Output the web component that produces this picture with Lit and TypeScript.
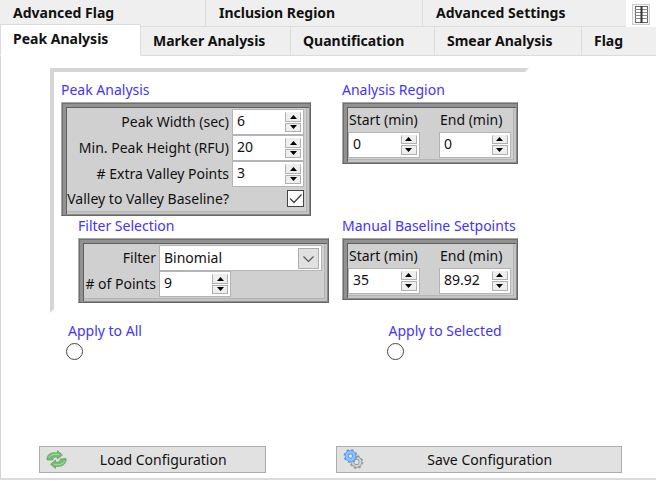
import { LitElement, html, css, svg } from "lit";
import { customElement, state } from "lit/decorators.js";
import { classMap } from "lit/directives/class-map.js";

const tableIcon = svg`
  <rect x="0.5" y="0.5" width="17" height="20" fill="#f4f4f4" stroke="#ccc" />
  <rect x="3.5" y="2.5" width="12" height="16" fill="#fff" stroke="#666" />
  <path d="M3 5.5h13M3 8.5h13M3 11.5h13M3 14.5h13" stroke="#888" />
  <path d="M9.5 2v17" stroke="#333" stroke-width="2" />`;

const reloadIcon = svg`
  <g fill="#72bd72" stroke="#5fa661" stroke-width="0.8" stroke-linejoin="round">
    <path d="M1 10C.5 4.500 5 2 11.500 3V.8L16.500 5 11.300 9V7C8.500 6.500 7 7.800 6.800 10Z" />
    <path d="M20 8.500C21 14 15.500 17.200 9.500 16.200V18.500L4.500 14.200 9.500 10V12.200C13 12.700 14.500 11 14.200 9Z" />
  </g>
  <path d="M3 7.500C4 5 8 3.800 13 4.500M18.500 11C18 14 13 15.300 8 14.600" fill="none" stroke="#b0e0ae" stroke-width="1" />`;

const gearsIcon = svg`
  <circle cx="13.500" cy="13" r="4" fill="none" stroke="#8a8a8a" stroke-width="3.400" />
  <circle cx="13.500" cy="13" r="5.800" fill="none" stroke="#999" stroke-width="2" stroke-dasharray="2.300 2.250" />
  <circle cx="13.500" cy="13" r="4" fill="none" stroke="#d2d2d2" stroke-width="2.200" />
  <circle cx="7.500" cy="7" r="3.800" fill="#d8e8fa" stroke="#4a88d8" stroke-width="4" />
  <circle cx="7.500" cy="7" r="6" fill="none" stroke="#5b98e0" stroke-width="1.800" stroke-dasharray="2.400 2.310" />
  <circle cx="7.500" cy="7" r="3.800" fill="none" stroke="#8fc0f6" stroke-width="2.800" />`;

@customElement("app-root")
class AppRoot extends LitElement {
  @state() private tab = "Peak Analysis";

  static styles = css`
    :host {
      display: flex;
      flex-direction: column;
      min-height: 100vh;
      background: #fff;
      color: #111;
      font: 14px/20px "Noto Sans", "Open Sans", sans-serif;
    }
    * {
      box-sizing: border-box;
    }
    .tabs {
      display: grid;
      background: #efefef;
    }
    .back {
      grid-template-columns: 206fr 217fr 203fr 30px;
      height: 27px;
      border-bottom: 1px solid #dcdcdc;
    }
    .front {
      grid-template-columns: 141fr 150fr 144fr 147fr 74fr;
      height: 29px;
    }
    .tab {
      min-width: 0;
      padding: 0 0 0 13px;
      border: 0;
      border-right: 1px solid #dcdcdc;
      background: none;
      color: #111;
      font: bold 14px/20px "Noto Sans", "Open Sans", sans-serif;
      text-align: left;
      white-space: nowrap;
    }
    .back .tab {
      padding-bottom: 2px;
    }
    .front .tab {
      padding-left: 12px;
      border-bottom: 1px solid #dcdcdc;
    }
    .back .tab:nth-child(3),
    .front .tab:last-child {
      border-right: 0;
    }
    .front .active {
      margin-top: -3px;
      padding-bottom: 2px;
      background: #fff;
      border: 1px solid #dcdcdc;
      border-bottom-color: #fff;
    }
    .grid-button {
      display: flex;
      align-items: center;
      justify-content: center;
      height: 28px;
      padding: 0;
      border: 0;
      background: #fff;
    }
    .panel {
      flex: 1;
      display: flex;
      flex-direction: column;
      margin-bottom: 1px;
      padding: 12px 34px 5px 38px;
      border-left: 1px solid #d4d4d4;
      border-bottom: 2px solid #dcdcdc;
    }
    .frame {
      display: grid;
      grid-template-columns: 284fr 185fr;
      margin: 0 93px 0 11px;
      padding: 8px 0 6px 7px;
      border: 4px solid #fff;
      border-top-color: #d6d6d6;
      border-left-color: #d6d6d6;
    }
    .group {
      display: flex;
      flex-direction: column;
      align-items: flex-start;
      min-height: 136px;
    }
    .group.last {
      min-height: 0;
    }
    .indent {
      padding-left: 17px;
    }
    .title,
    .apply label {
      color: #4433ff;
    }
    .title {
      margin-bottom: 2px;
    }
    .box {
      display: grid;
      align-items: center;
      padding: 6px 6px 5px 5px;
      background: #d0d0d0;
      border: 1px solid #666;
      border-top-color: #aaa;
      border-left-color: #aaa;
      box-shadow: inset 1px 1px #707070, inset -1px -1px #8c8c8c,
        inset 4px 4px #929292, inset 5px 5px #606060,
        inset -3px -3px #c4c4c4, inset -4px -4px #b4b4b4;
    }
    .peak {
      grid-template-columns: 1fr 72px;
      grid-template-rows: repeat(3, 26px) 23px;
      width: 250px;
    }
    .filter {
      grid-template-columns: 75px 72px 1fr;
      grid-template-rows: 26px 26px;
      width: 251px;
    }
    .range {
      grid-template-columns: 72px 72px;
      grid-template-rows: 22px 27px;
      justify-content: space-between;
      width: 176px;
    }
    .range label {
      padding-left: 1px;
    }
    .peak label,
    .filter label {
      padding-right: 3px;
      text-align: right;
      white-space: nowrap;
    }
    .spin {
      display: flex;
      width: 72px;
      height: 26px;
      padding: 2px;
      background: #fff;
      border: 1px solid #b4b4b8;
    }
    .spin input {
      flex: 1;
      min-width: 0;
      padding: 0 0 2px 2px;
      border: 0;
      outline: 0;
      background: none;
      color: #111;
      font: 14px/18px "Noto Sans", "Open Sans", sans-serif;
    }
    .arrows {
      display: grid;
      grid-template-rows: 1fr 1fr;
      gap: 1px;
      width: 16px;
    }
    .arrow {
      display: flex;
      align-items: center;
      justify-content: center;
      min-height: 0;
      padding: 0;
      background: #eee;
      border: 1px solid #b0b0b0;
    }
    .up {
      border-top-color: #eee;
    }
    .arrow svg {
      display: block;
      width: 7px;
      height: 4px;
    }
    .check {
      appearance: none;
      width: 17px;
      height: 17px;
      margin: 0;
      background: #fff;
      border: 1px solid #444;
    }
    .tick {
      display: grid;
      justify-content: end;
    }
    .tick > * {
      grid-area: 1 / 1;
    }
    .tick svg {
      width: 17px;
      height: 17px;
      pointer-events: none;
    }
    .check:not(:checked) + svg {
      visibility: hidden;
    }
    .pick {
      grid-column: 2 / 4;
      display: grid;
      grid-template-columns: 1fr 24px;
    }
    .pick > * {
      grid-row: 1;
    }
    select {
      appearance: none;
      grid-column: 1 / 3;
      height: 26px;
      padding: 0 4px;
      background: #fff;
      border: 1px solid #b4b4b8;
      border-radius: 0;
      color: #111;
      font: inherit;
    }
    .pick svg {
      grid-column: 2;
      place-self: center start;
      width: 21px;
      height: 21px;
      pointer-events: none;
    }
    .apply {
      display: grid;
      grid-template-columns: 320fr 235fr;
      margin: 8px 0 16px 27px;
    }
    .apply div {
      display: flex;
      flex-direction: column;
      align-items: flex-start;
      gap: 2px;
    }
    .apply label {
      padding-left: 2px;
    }
    .apply input {
      appearance: none;
      width: 17px;
      height: 17px;
      margin: 0;
      border: 1px solid #444;
      border-radius: 50%;
    }
    .apply input:checked {
      box-shadow: inset 0 0 0 3px #fff, inset 0 0 0 9px #333;
    }
    .actions {
      display: grid;
      grid-template-columns: 227fr 285fr;
      gap: 70px;
      margin-top: auto;
    }
    .action {
      display: flex;
      align-items: center;
      height: 27px;
      padding: 0 6px;
      background: #e1e1e1;
      border: 1px solid #adadad;
      color: #111;
      font: inherit;
    }
    .action span {
      flex: 1;
    }
  `;

  private tabs(names: string[]) {
    return names.map(
      (name) => html`<button
        role="tab"
        class=${classMap({ tab: true, active: name === this.tab })}
        aria-selected=${name === this.tab}
        @click=${() => (this.tab = name)}
      >${name}</button>`
    );
  }

  private step(id: string, by: number) {
    const input = this.renderRoot.querySelector<HTMLInputElement>(`#${id}`)!;
    input.value = String(Number(input.value) + by);
  }

  private spin(id: string, value: string) {
    return html`
      <span class="spin">
        <input id=${id} type="text" inputmode="decimal" value=${value} />
        <span class="arrows">
          <button class="arrow up" aria-label="Increase" @click=${() => this.step(id, 1)}>
            <svg viewBox="0 0 7 4"><path d="M3.5 0 7 4H0Z" /></svg>
          </button>
          <button class="arrow" aria-label="Decrease" @click=${() => this.step(id, -1)}>
            <svg viewBox="0 0 7 4"><path d="M0 0h7L3.5 4Z" /></svg>
          </button>
        </span>
      </span>
    `;
  }

  private spinRow(id: string, label: string, value: string) {
    return html`<label for=${id}>${label}</label>${this.spin(id, value)}`;
  }

  private range(id: string, title: string, start: string, end: string, last = false) {
    return html`
      <section class=${classMap({ group: true, last })}>
        <div class="title">${title}</div>
        <div class="box range">
          <label for="${id}-start">Start (min)</label>
          <label for="${id}-end">End (min)</label>
          ${this.spin(`${id}-start`, start)} ${this.spin(`${id}-end`, end)}
        </div>
      </section>
    `;
  }

  render() {
    return html`
      <div class="tabs back" role="tablist">
        ${this.tabs(["Advanced Flag", "Inclusion Region", "Advanced Settings"])}
        <button class="grid-button" aria-label="Table">
          <svg width="18" height="21" viewBox="0 0 18 21">${tableIcon}</svg>
        </button>
      </div>
      <div class="tabs front" role="tablist">
        ${this.tabs(["Peak Analysis", "Marker Analysis", "Quantification", "Smear Analysis", "Flag"])}
      </div>
      <main class="panel">
        <div class="frame">
          <section class="group">
            <div class="title">Peak Analysis</div>
            <div class="box peak">
              ${this.spinRow("width", "Peak Width (sec)", "6")}
              ${this.spinRow("height", "Min. Peak Height (RFU)", "20")}
              ${this.spinRow("extra", "# Extra Valley Points", "3")}
              <label for="valley">Valley to Valley Baseline?</label>
              <span class="tick">
                <input class="check" id="valley" type="checkbox" checked />
                <svg viewBox="0 0 17 17"><path d="M3 8.500 7 12.500 14.500 4.500" fill="none" stroke="#444" stroke-width="1.300" /></svg>
              </span>
            </div>
          </section>
          ${this.range("region", "Analysis Region", "0", "0")}
          <section class="group last indent">
            <div class="title">Filter Selection</div>
            <div class="box filter">
              <label for="filter">Filter</label>
              <span class="pick">
                <select id="filter">
                  <option>Binomial</option>
                </select>
                <svg viewBox="0 0 21 21">
                  <rect x="0.500" y="0.500" width="20" height="20" fill="#e1e1e1" stroke="#adadad" />
                  <path d="m5.500 8.500 5 5 5-5" fill="none" stroke="#555" stroke-width="1.200" />
                </svg>
              </span>
              ${this.spinRow("points", "# of Points", "9")}
            </div>
          </section>
          ${this.range("baseline", "Manual Baseline Setpoints", "35", "89.92", true)}
        </div>
        <div class="apply">
          <div>
            <label for="all">Apply to All</label>
            <input id="all" type="radio" name="apply" />
          </div>
          <div>
            <label for="selected">Apply to Selected</label>
            <input id="selected" type="radio" name="apply" />
          </div>
        </div>
        <div class="actions">
          <button class="action">
            <svg width="21" height="19" viewBox="0 0 21 19">${reloadIcon}</svg>
            <span>Load Configuration</span>
          </button>
          <button class="action">
            <svg width="21" height="21" viewBox="0 0 21 21">${gearsIcon}</svg>
            <span>Save Configuration</span>
          </button>
        </div>
      </main>
    `;
  }
}
